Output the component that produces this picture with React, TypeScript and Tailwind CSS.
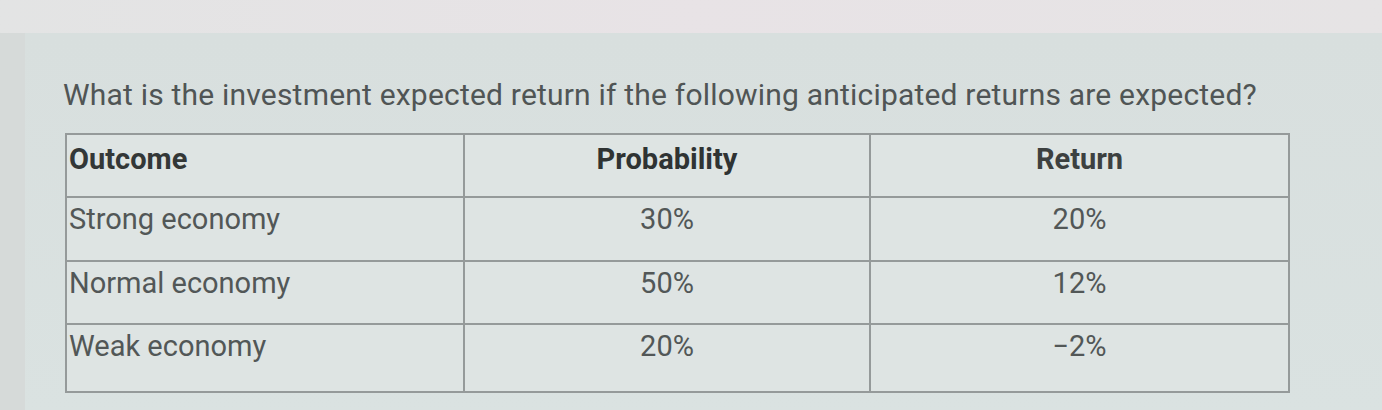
import React from "react";

const rows = [
  { outcome: "Strong economy", prob: "30%", ret: "20%" },
  { outcome: "Normal economy", prob: "50%", ret: "12%" },
  { outcome: "Weak economy", prob: "20%", ret: "−2%" },
];

const App = () => {
  return (
    <div className="h-[410px] w-full overflow-hidden bg-gradient-to-r from-[#e3e4e4] via-[#e8e3e6] to-[#e6e4e5] font-['Roboto',sans-serif]">
      <div className="h-[33px]" />
      <div className="flex h-[377px]">
        <div className="w-[25px] bg-[#d6dad9]" />
        <div className="flex-1 bg-gradient-to-b from-[#d8dfde] to-[#dae2e1] pl-[38px] pt-[45px]">
          <p className="text-[30px] leading-[34px] text-[#505555] tracking-[0.2px]">
            What is the investment expected return if the following anticipated returns are expected?
          </p>
          <table className="ml-[2px] mt-[21px] w-[1225px] border-collapse bg-[#dee4e3] text-[29px] text-[#525757]">
            <thead>
              <tr className="h-[63px]">
                <th className="w-[398px] border-2 border-[#959a9a] px-[2px] pb-[12px] text-left font-bold text-[#333737]">Outcome</th>
                <th className="w-[406px] border-2 border-[#959a9a] pb-[12px] text-center font-bold text-[#2f3333]">Probability</th>
                <th className="border-2 border-[#959a9a] pb-[12px] text-center font-bold text-[#3c4040]">Return</th>
              </tr>
            </thead>
            <tbody>
              {rows.map((r, i) => (
                <tr key={r.outcome} className={i === 2 ? "h-[65px]" : "h-[63px]"}>
                  <td className={`border-2 border-[#959a9a] px-[2px] ${i === 2 ? "pb-[22px]" : "pb-[18px]"}`}>{r.outcome}</td>
                  <td className={`border-2 border-[#959a9a] text-center ${i === 2 ? "pb-[22px]" : "pb-[18px]"}`}>{r.prob}</td>
                  <td className={`border-2 border-[#959a9a] text-center ${i === 2 ? "pb-[22px]" : "pb-[18px]"}`}>{r.ret}</td>
                </tr>
              ))}
            </tbody>
          </table>
        </div>
      </div>
    </div>
  );
};

export default App;
